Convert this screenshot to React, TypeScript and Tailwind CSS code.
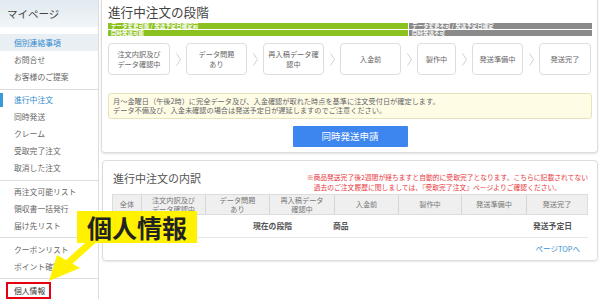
const steps = [
  { label: ["注文内訳及び", "データ確認中"], w: "w-[62px]" },
  { label: ["データ問題", "あり"], w: "w-[61px]" },
  { label: ["再入稿データ確", "認中"], w: "w-[61px]" },
  { label: ["入金前"], w: "w-[61px]" },
  { label: ["製作中"], w: "w-[39px]" },
  { label: ["発送準備中"], w: "w-[51px]" },
  { label: ["発送完了"], w: "w-[52px]" },
];

const cols = [
  { label: ["全体"], w: "w-[28px]" },
  { label: ["注文内訳及び", "データ確認中"], w: "w-[64px]" },
  { label: ["データ問題", "あり"], w: "w-[64px]" },
  { label: ["再入稿データ", "確認中"], w: "w-[65px]" },
  { label: ["入金前"], w: "w-[64px]" },
  { label: ["製作中"], w: "w-[63px]" },
  { label: ["発送準備中"], w: "w-[65px]" },
  { label: ["発送完了"], w: "flex-1" },
];

function Chevron() {
  return (
    <div className="w-[16px] flex justify-center">
      <svg width="5" height="13" viewBox="0 0 5 13">
        <polyline points="0.5,0.5 4.5,6.5 0.5,12.5" fill="none" stroke="#c4c4c4" strokeWidth="0.8" />
      </svg>
    </div>
  );
}

function SideItem({ children, active, current }: { children: string; active?: boolean; current?: boolean }) {
  return (
    <div
      className={`relative h-[17px] flex items-center pl-[14px] ${active ? "bg-[#e9eff3] text-[#2f8ad1]" : ""} ${
        current ? "text-[#2f8ad1]" : ""
      }`}
    >
      {current && <div className="absolute left-0 top-[2px] w-[3px] h-[14px] bg-[#3b9ad9]" />}
      {children}
    </div>
  );
}

function Sidebar() {
  return (
    <div className="w-[99px] shrink-0 border-r border-[#dcdcdc] flex flex-col text-[7.8px] text-[#666]">
      <div className="h-[27px] bg-gradient-to-b from-[#e1eaf0] to-[#f1f5f8] flex items-center pl-[7px] text-[10.5px] text-[#444]">
        マイページ
      </div>
      <div className="pt-[7px] pb-[4px] border-b border-[#dddddd]">
        <SideItem active>個別連絡事項</SideItem>
        <SideItem>お問合せ</SideItem>
        <SideItem>お客様のご提案</SideItem>
      </div>
      <div className="pt-[1px] pb-[4px] border-b border-[#dddddd]">
        <SideItem current>進行中注文</SideItem>
        <SideItem>同時発送</SideItem>
        <SideItem>クレーム</SideItem>
        <SideItem>受取完了注文</SideItem>
        <SideItem>取消した注文</SideItem>
      </div>
      <div className="pt-[2px] pb-[3px] border-b border-[#dddddd]">
        <SideItem>再注文可能リスト</SideItem>
        <SideItem>領収書一括発行</SideItem>
        <SideItem>届け先リスト</SideItem>
      </div>
      <div className="pt-[3px] pb-[3px] border-b border-[#dddddd]">
        <SideItem>クーポンリスト</SideItem>
        <SideItem>ポイント確認</SideItem>
      </div>
      <div className="pt-[3px]">
        <div className="ml-[6px] w-[45px] h-[17px] border-2 border-[#e60012] flex items-center pl-[6px] text-[#333]">
          個人情報
        </div>
      </div>
    </div>
  );
}

function StagePanel() {
  return (
    <div className="border-x border-b border-[#dddddd] rounded-b-[4px] shadow-[0_1px_2px_rgba(0,0,0,0.12)] pl-[6px] pr-[5px] pb-[5px]">
      <div className="pt-[3px] h-[21px] text-[12.6px] leading-[18px] text-[#444]">進行中注文の段階</div>
      <div className="mt-[2px] flex gap-[1px] text-[5.5px] leading-[6px] font-bold text-white">
        <div className="w-[300px] flex flex-col gap-[1px]">
          <div className="h-[6px] bg-[#8cc21f] pl-[3px] overflow-hidden whitespace-nowrap">データ変更可能 / 発送予定日確定前</div>
          <div className="h-[6px] bg-[#8cc21f] pl-[3px] overflow-hidden whitespace-nowrap">同時発送可能</div>
        </div>
        <div className="flex-1 flex flex-col gap-[1px]">
          <div className="h-[6px] bg-[#8a8a8a] pl-[3px] overflow-hidden whitespace-nowrap">データ変更不可 / 発送予定日確定</div>
          <div className="h-[6px] bg-[#8a8a8a] pl-[3px] overflow-hidden whitespace-nowrap">同時発送不可</div>
        </div>
      </div>
      <div className="mt-[7px] flex items-center">
        {steps.map((s, i) => (
          <div key={i} className="flex items-center">
            {i > 0 && <Chevron />}
            <div
              className={`${s.w} h-[32px] border border-[#dddddd] rounded-[4px] flex flex-col items-center justify-center text-center text-[7.2px] leading-[10px] text-[#666]`}
            >
              {s.label.map((l) => (
                <span key={l}>{l}</span>
              ))}
            </div>
          </div>
        ))}
      </div>
      <div className="mt-[18px] h-[26px] border border-[#e8e2bb] bg-[#fffce6] rounded-[3px] px-[4px] py-[3px] text-[7.2px] leading-[9px] text-[#666]">
        <div>月～金曜日（午後2時）に完全データ及び、入金確認が取れた時点を基準に注文受付日が確定します。</div>
        <div>データ不備及び、入金未確認の場合は発送予定日が遅延しますのでご注意ください。</div>
      </div>
      <div className="mt-[7px] mx-auto w-[115px] h-[21px] bg-[#3e86ef] rounded-[1px] flex items-center justify-center text-white text-[9.5px]">
        同時発送申請
      </div>
    </div>
  );
}

function DetailPanel() {
  return (
    <div className="mt-[7px] ml-[1px] border border-[#dddddd] rounded-[4px] shadow-[0_1px_2px_rgba(0,0,0,0.1)] px-[9px]">
      <div className="pt-[11px] flex justify-between items-start">
        <div className="text-[11px] leading-[12px] text-[#555] pl-[1px]">進行中注文の内訳</div>
        <div className="text-[6.8px] leading-[10px] text-[#e8383d]">
          <div>※商品発送完了後2週間が経ちますと自動的に受取完了となります。こちらに記載されてない</div>
          <div className="pl-[7px]">過去のご注文履歴に関しましては、『受取完了注文』ページよりご確認ください。</div>
        </div>
      </div>
      <div className="mt-[2px] h-[21px] flex bg-[#efefef] border border-[#dddddd] text-[7.2px] leading-[9px] text-[#777]">
        {cols.map((c, i) => (
          <div
            key={i}
            className={`${c.w} ${i > 0 ? "border-l border-[#d6d6d6]" : ""} flex flex-col items-center justify-center text-center`}
          >
            {c.label.map((l) => (
              <span key={l}>{l}</span>
            ))}
          </div>
        ))}
      </div>
      <div className="h-[23px] flex items-center border-b border-[#e6e6e6] text-[7.8px] font-bold text-[#555]">
        <div className="w-[141px]" />
        <div className="w-[80px]">現在の段階</div>
        <div className="flex-1">商品</div>
        <div className="pr-[16px]">発送予定日</div>
      </div>
      <div className="h-[22px] flex items-center justify-end pr-[8px] text-[7.5px] text-[#3a8fd0]">ページTOPへ</div>
    </div>
  );
}

export default function App() {
  return (
    <div className="relative w-[600px] h-[299px] overflow-hidden bg-white flex font-['Noto_Sans_CJK_JP',sans-serif]">
      <Sidebar />
      <div className="flex-1 pl-[2px] pr-[2px] flex flex-col">
        <StagePanel />
        <DetailPanel />
      </div>

      {/* callout arrow */}
      <svg className="absolute left-0 top-0 pointer-events-none" width="600" height="299" viewBox="0 0 600 299">
        <line x1="68" y1="263" x2="97" y2="237" stroke="#fff100" strokeWidth="7" />
        <polygon points="49,281 57,255 80,268" fill="#fff100" />
      </svg>
      <div className="absolute left-[77px] top-[211px] w-[120px] h-[32px] bg-[#fff100] flex items-center justify-center text-[25px] leading-none font-bold text-[#222]">
        個人情報
      </div>
    </div>
  );
}
